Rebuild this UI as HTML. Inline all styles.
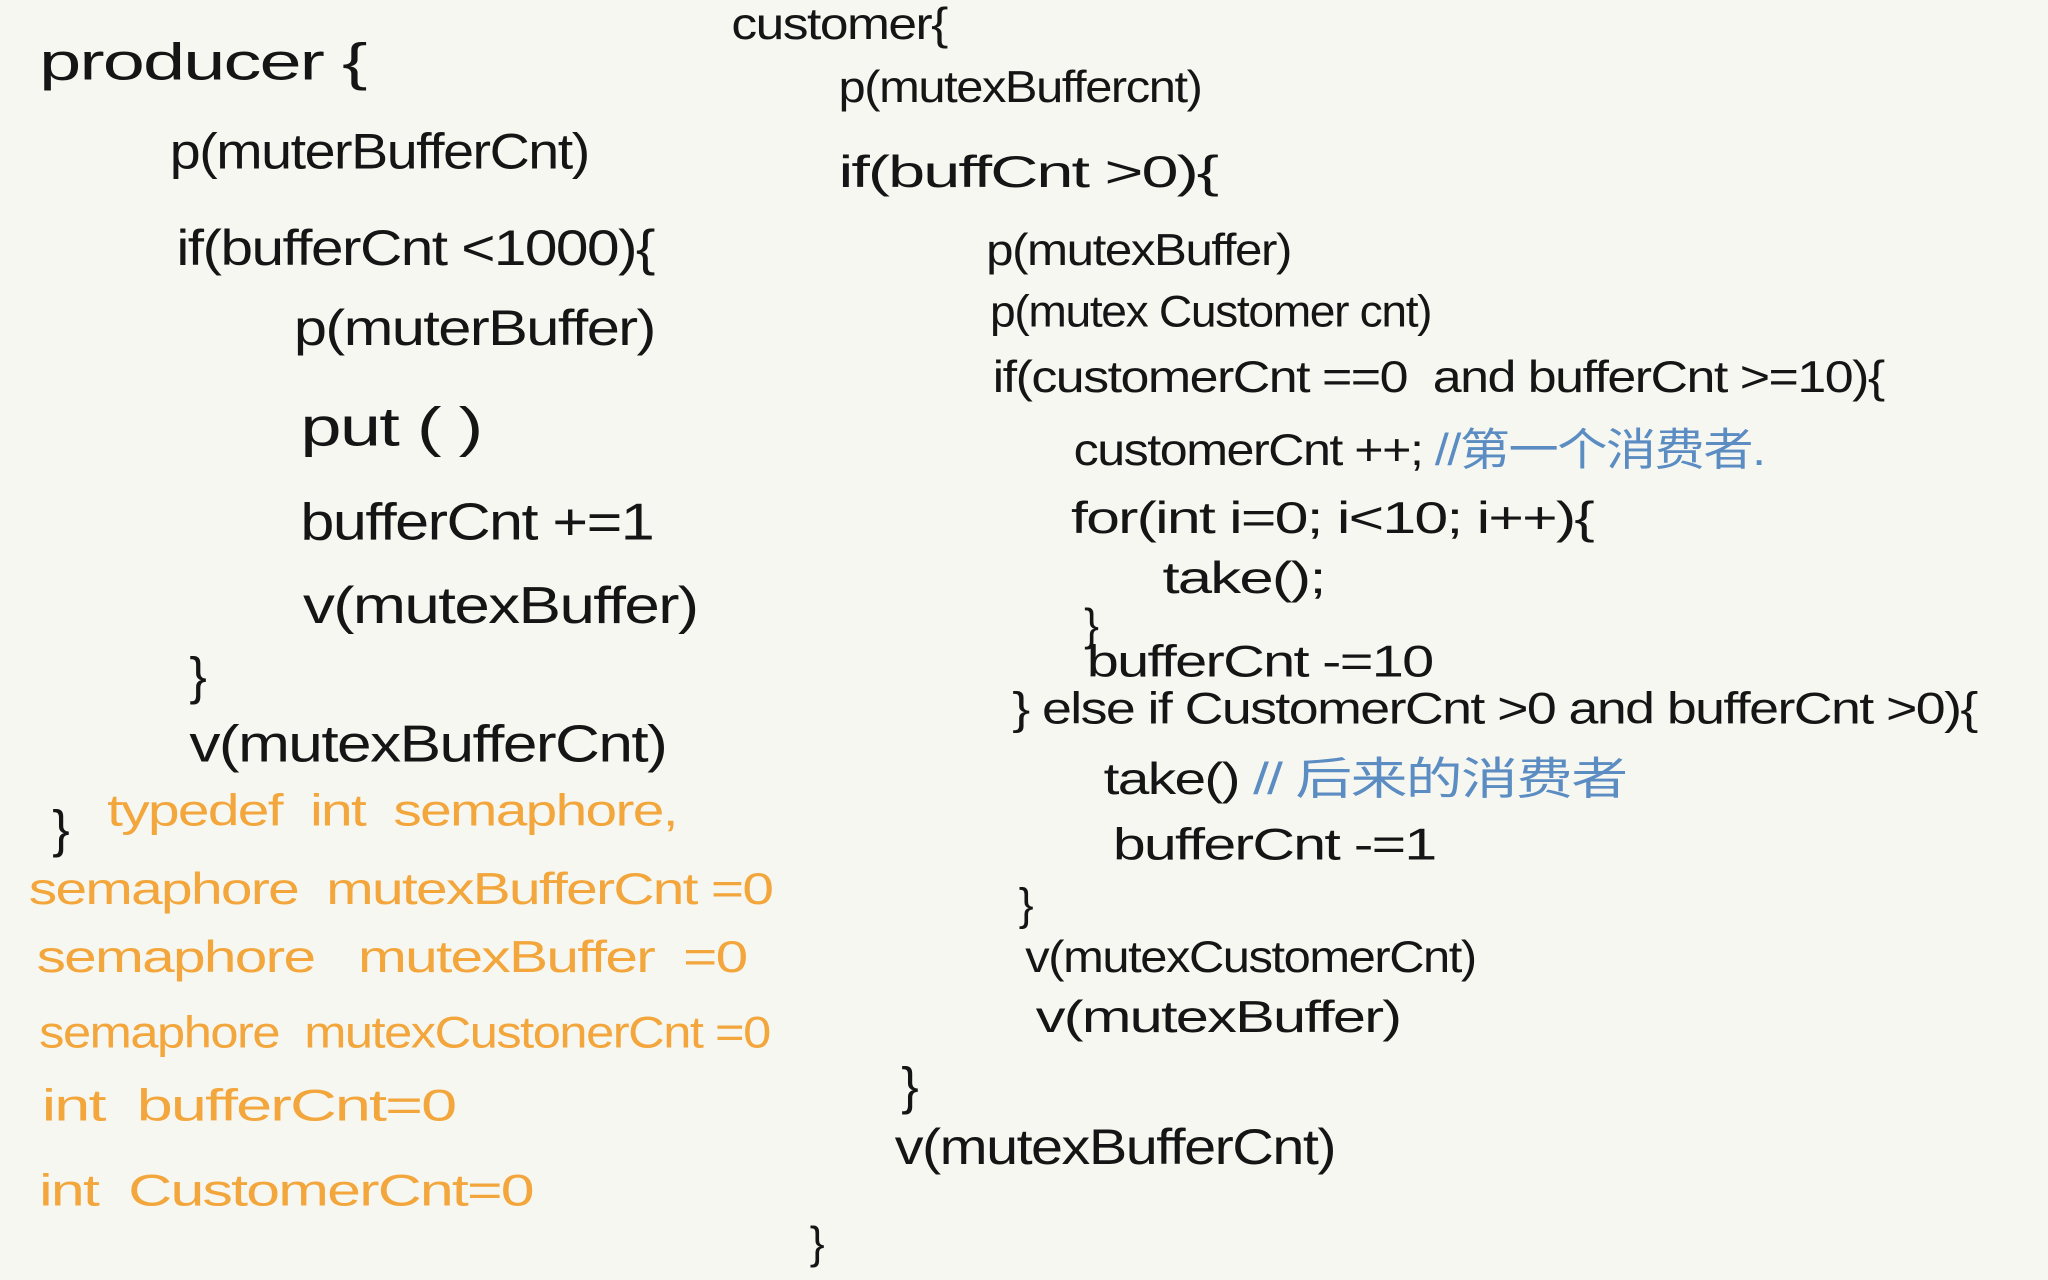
<!DOCTYPE html>
<html><head><meta charset="utf-8"><style>
html,body{margin:0;padding:0;background:#f7f7f2;}
#w{position:relative;width:1568px;height:980px;transform:scale(1.30612);transform-origin:0 0;overflow:hidden;}
.t{position:absolute;white-space:pre;font-family:"Liberation Sans","Noto Sans CJK SC",sans-serif;color:#151515;font-size:34px;line-height:1;letter-spacing:-1px;transform-origin:0 0;}
.o{color:#f2a63c;}
.b{color:#5b8cc2;}
</style></head><body><div id="w">
<div class="t" style="left:30px;top:28px;font-size:40px;transform:scaleX(1.45)">producer {</div>
<div class="t" style="left:130px;top:98px;font-size:38px;transform:scaleX(1.12)">p(muterBufferCnt)</div>
<div class="t" style="left:135px;top:172px;font-size:38px;transform:scaleX(1.18)">if(bufferCnt &lt;1000){</div>
<div class="t" style="left:225px;top:233px;font-size:38px;transform:scaleX(1.2)">p(muterBuffer)</div>
<div class="t" style="left:230px;top:306px;font-size:42px;transform:scaleX(1.35)">put ( )</div>
<div class="t" style="left:230px;top:380px;font-size:40px;transform:scaleX(1.17)">bufferCnt +=1</div>
<div class="t" style="left:232px;top:444px;font-size:40px;transform:scaleX(1.22)">v(mutexBuffer)</div>
<div class="t" style="left:145px;top:498px;font-size:40px">}</div>
<div class="t" style="left:145px;top:550px;font-size:40px;transform:scaleX(1.19)">v(mutexBufferCnt)</div>
<div class="t" style="left:40px;top:615px;font-size:40px">}</div>
<div class="t o" style="left:82px;top:604px;transform:scaleX(1.28)">typedef  int  semaphore,</div>
<div class="t o" style="left:22px;top:664px;transform:scaleX(1.28)">semaphore  mutexBufferCnt =0</div>
<div class="t o" style="left:28px;top:716px;transform:scaleX(1.32)">semaphore   mutexBuffer  =0</div>
<div class="t o" style="left:30px;top:774px;transform:scaleX(1.14)">semaphore  mutexCustonerCnt =0</div>
<div class="t o" style="left:32px;top:830px;transform:scaleX(1.46)">int  bufferCnt=0</div>
<div class="t o" style="left:30px;top:895px;transform:scaleX(1.37)">int  CustomerCnt=0</div>

<div class="t" style="left:560px;top:2px;transform:scaleX(1.16)">customer{</div>
<div class="t" style="left:642px;top:50px;transform:scaleX(1.1)">p(mutexBuffercnt)</div>
<div class="t" style="left:642px;top:115px;transform:scaleX(1.5)">if(buffCnt &gt;0){</div>
<div class="t" style="left:755px;top:175px;transform:scaleX(1.11)">p(mutexBuffer)</div>
<div class="t" style="left:758px;top:222px;transform:scaleX(1.04)">p(mutex Customer cnt)</div>
<div class="t" style="left:760px;top:272px;transform:scaleX(1.17)">if(customerCnt ==0  and bufferCnt &gt;=10){</div>
<div class="t" style="left:822px;top:328px;transform:scaleX(1.13)">customerCnt ++; <span class="b">//第一个消费者.</span></div>
<div class="t" style="left:820px;top:380px;transform:scaleX(1.37)">for(int i=0; i&lt;10; i++){</div>
<div class="t" style="left:890px;top:426px;transform:scaleX(1.39)">take();</div>
<div class="t" style="left:830px;top:462px">}</div>
<div class="t" style="left:832px;top:490px;transform:scaleX(1.3)">bufferCnt -=10</div>
<div class="t" style="left:775px;top:526px;transform:scaleX(1.21)">} else if CustomerCnt &gt;0 and bufferCnt &gt;0){</div>
<div class="t" style="left:845px;top:580px;transform:scaleX(1.28)">take() <span class="b">// 后来的消费者</span></div>
<div class="t" style="left:852px;top:630px;transform:scaleX(1.33)">bufferCnt -=1</div>
<div class="t" style="left:780px;top:676px">}</div>
<div class="t" style="left:785px;top:716px;transform:scaleX(1.1)">v(mutexCustomerCnt)</div>
<div class="t" style="left:793px;top:762px;transform:scaleX(1.34)">v(mutexBuffer)</div>
<div class="t" style="left:690px;top:812px;font-size:40px">}</div>
<div class="t" style="left:685px;top:860px;font-size:38px;transform:scaleX(1.16)">v(mutexBufferCnt)</div>
<div class="t" style="left:620px;top:935px">}</div>
</div></body></html>
